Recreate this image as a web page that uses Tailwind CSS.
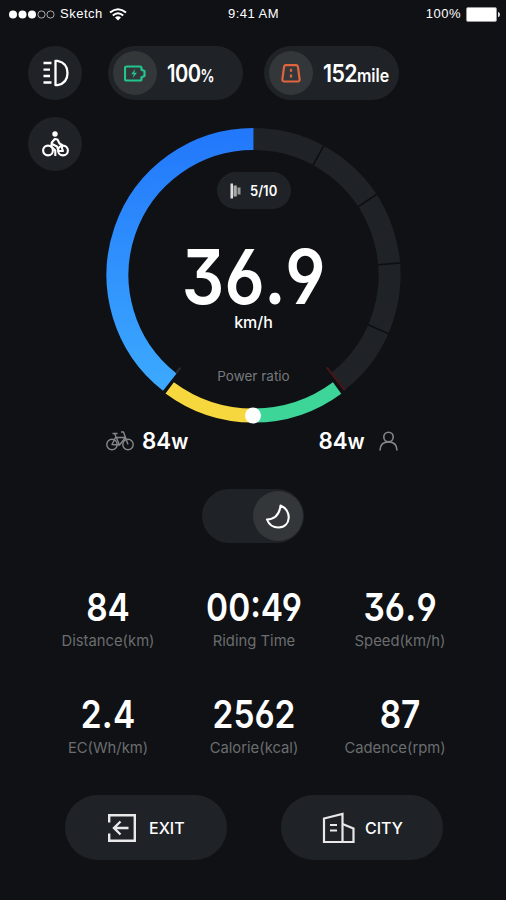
<!DOCTYPE html>
<html lang="en">

<head>
  <meta charset="UTF-8" />
  <meta name="viewport" content="width=device-width, initial-scale=1.0" />
  <title>Ride Dashboard</title>
  <script src="https://cdn.jsdelivr.net/npm/@tailwindcss/browser@4"></script>
  <style>
    /* open six / nine and flat three for the digits */
    .num {
      font-feature-settings: "cv03", "cv04", "cv09";
    }
  </style>
</head>

<body class="bg-[#0f1114] text-white font-['Inter',sans-serif] w-[506px] h-[900px] overflow-hidden flex flex-col">

  <!-- Status bar -->
  <div class="grid grid-cols-3 items-center h-7 pl-[9px] pr-[6px] font-['Liberation_Sans',sans-serif] shrink-0">
    <div class="flex items-center">
      <svg class="w-[47px] h-[9px]" viewBox="0 0 47 9">
        <g fill="#fff">
          <circle cx="4" cy="4.5" r="4" />
          <circle cx="13.5" cy="4.5" r="4" />
          <circle cx="23" cy="4.5" r="4" />
        </g>
        <g fill="none" stroke="#aaa" stroke-width="1">
          <circle cx="32.5" cy="4.5" r="3.6" />
          <circle cx="41.5" cy="4.5" r="3.6" />
        </g>
      </svg>
      <span class="ml-[4px] w-[43px] text-[13px] tracking-[0.5px]">Sketch</span>
      <svg class="ml-[6px] w-[18px] h-[13px]" viewBox="0 0 18 13" fill="none" stroke="#fff" stroke-width="2">
        <path d="M1 4.6Q9-2.2 17 4.6" />
        <path d="M3.8 7.6Q9 3 14.2 7.6" />
        <path d="M6 9.6Q9 7 12 9.6L9 12.6Z" fill="#fff" stroke="none" />
      </svg>
    </div>
    <div class="text-center text-[13px] tracking-[0.45px] translate-x-[-1px]">9:41 AM</div>
    <div class="flex items-center justify-end">
      <span class="text-[13px] tracking-[0.5px]">100%</span>
      <svg class="ml-[5px] w-[34px] h-[15px]" viewBox="0 0 34 15">
        <rect x=".5" y=".5" width="30" height="14" rx="1.5" fill="#fff" stroke="#999" />
        <path d="M32 5q2 0 2 2.500t-2 2.500z" fill="#ddd" />
      </svg>
    </div>
  </div>

  <div class="flex pl-[28px] mt-[18px] shrink-0">
    <!-- Side buttons -->
    <div class="flex flex-col gap-[17px]">
      <button class="w-[54px] h-[54px] rounded-full bg-[#1f2328] flex items-center justify-center">
        <svg class="w-[27px] h-[28px]" viewBox="0 0 27 28" fill="none" stroke="#fff" stroke-width="2.300">
          <path d="M1.500 4h8M1.500 10.600h6.500M1.500 17h6.500M1.500 23.500h8" />
          <path d="M13.500 1.800h2q10 2 10 12.200t-10 12.200h-2z" stroke-linejoin="round" />
        </svg>
      </button>
      <button class="w-[54px] h-[54px] rounded-full bg-[#1f2328] flex items-center justify-center">
        <svg class="w-[27px] h-[26px]" viewBox="0 0 27 26" fill="none" stroke="#fff" stroke-width="2.100" stroke-linejoin="round">
          <circle cx="6" cy="19.500" r="4.900" />
          <circle cx="21" cy="19.500" r="4.900" />
          <circle cx="13" cy="3" r="2.700" fill="#fff" stroke="none" />
          <path d="M13.300 25v-5.500l-4-4 .5-4 3-3.500 2.700.5 2 4 2.500 1.500v3M10 13l5 2.500 1.500 4.500h4.500l-1.500-4" />
        </svg>
      </button>
    </div>

    <div class="ml-[24px] w-[295px]">
      <!-- Battery and range -->
      <div class="flex pl-[2px] gap-[21px] w-[296px]">
        <div class="flex items-center w-[135px] h-[54px] rounded-full bg-[#1f2328] pl-[5px] shrink-0">
          <div class="w-[44px] h-[44px] rounded-full bg-[#33373a] flex items-center justify-center">
            <svg class="w-[22px] h-[17px]" viewBox="0 0 22 17" fill="none" stroke="#22c58b" stroke-width="2.200">
              <path d="M2.500 1.500h13.500q1.500 0 1.500 1.500v1.800l3 1.200v5l-3 1.200v1.800q0 1.500-1.500 1.500h-13.500q-1.500 0-1.500-1.500v-11q0-1.500 1.500-1.500z" stroke-linejoin="round" />
              <path d="M11.200 4l-4 5.200h2.600l-1 3.800 4.200-5.200h-2.700z" fill="#22c58b" stroke="none" />
            </svg>
          </div>
          <div class="ml-[10px] mt-[2px] flex items-baseline font-semibold origin-left scale-x-[.84] whitespace-nowrap">
            <span class="num text-[24px] tracking-[-0.7px]">100</span><span class="text-[17px]">%</span>
          </div>
        </div>
        <div class="flex items-center w-[135px] h-[54px] rounded-full bg-[#1f2328] pl-[5px] shrink-0">
          <div class="w-[44px] h-[44px] rounded-full bg-[#33373a] flex items-center justify-center">
            <svg class="w-[20px] h-[19px]" viewBox="0 0 20 19" fill="none" stroke="#e0653f" stroke-width="2.200">
              <path d="M5 1.200h10q1.600 0 1.900 1.500l1.700 12.300q.2 2.500-2 2.500h-13.200q-2.200 0-2-2.500l1.700-12.300q.3-1.500 1.900-1.500z" />
              <path d="M10 4.800v3M10 10.500v3" />
            </svg>
          </div>
          <div class="ml-[10px] mt-[2px] flex items-baseline font-semibold origin-left scale-x-[.89] whitespace-nowrap">
            <span class="num text-[24px] tracking-[-0.7px]">152</span><span class="text-[18px]">mile</span>
          </div>
        </div>
      </div>

      <!-- Speed gauge -->
      <div class="relative mt-[28px] w-[295px] h-[295px]">
        <svg class="w-[295px] h-[295px] overflow-visible" viewBox="0 0 295 295" fill="none">
          <defs>
            <linearGradient id="speed" x1="0" y1="0" x2="0" y2="260" gradientUnits="userSpaceOnUse">
              <stop offset="0" stop-color="#2277fb" />
              <stop offset="1" stop-color="#3ca9fe" />
            </linearGradient>
          </defs>
          <path d="M147.500 11A136 136 0 0 1 231.200 254.200" stroke="#1f2328" stroke-width="22" />
          <path d="M63.800 254.200A136 136 0 0 1 147.500 11" stroke="url(#speed)" stroke-width="22" />
          <!-- gear ticks -->
          <g stroke="#0c0e11" stroke-width="1.600">
            <path d="M147.500 0v22" transform="rotate(28.500 147.500 147)" />
            <path d="M147.500 0v22" transform="rotate(56.800 147.500 147)" />
            <path d="M147.500 0v22" transform="rotate(85.300 147.500 147)" />
            <path d="M147.500 0v22" transform="rotate(113.500 147.500 147)" />
          </g>
          <path d="M147.500 0v29" stroke="#4a1517" stroke-width="2" transform="rotate(141.600 147.500 147)" />
          <path d="M147.500 22v7" stroke="#292c2f" stroke-width="2" transform="rotate(218.300 147.500 147)" />
          <path d="M63.700 259.800A140.500 140.500 0 0 0 147.500 287.500" stroke="#f6d83e" stroke-width="14" />
          <path d="M147.500 287.500A140.500 140.500 0 0 0 231.100 260" stroke="#3dd598" stroke-width="14" />
          <circle cx="147" cy="287.500" r="8" fill="#fff" />
        </svg>
        <div class="absolute inset-0 flex flex-col items-center">
          <div class="mt-[44px] w-[74px] h-[37px] rounded-full bg-[#1f2328] flex items-center justify-center gap-[8px]">
            <svg class="w-[12px] h-[16px]" viewBox="0 0 12 16">
              <path d="M.5.5h2.500v15h-2.500z" fill="#ddd" />
              <path d="M3.500 2.500h3.300v11h-3.300z" fill="#aaa" />
              <path d="M7.500 4.500h3v7h-3z" fill="#999" />
            </svg>
            <span class="text-[14px] font-semibold w-[28px] origin-left scale-x-[.93]">5/10</span>
          </div>
          <div class="num mt-[39px] h-[58px] text-[75px] leading-[58px] font-semibold scale-x-[.89]">36<span class="font-['Lato',sans-serif] font-black leading-[20px] inline-block w-[23px] text-center">.</span>9</div>
          <div class="mt-[6px] text-[16px] leading-[20px] font-medium">km/h</div>
          <div class="mt-[36px] text-[13.500px] leading-[16px] text-[#77797b]">Power ratio</div>
        </div>
      </div>

      <!-- Power split -->
      <div class="flex items-center justify-between h-[26px] mt-[5px] pr-[3px]">
        <div class="flex items-center">
          <svg class="w-[28px] h-[20px]" viewBox="0 0 28 20" fill="none" stroke="#85878a" stroke-width="1.400" stroke-linejoin="round">
            <circle cx="6" cy="13.500" r="5.200" />
            <circle cx="22" cy="13.500" r="5.200" />
            <path d="M6 13.500l3.500-7h10l-6 7.500zM13.500 14l-4.700-11M6.500 2.500h5M22 13.500l-4.500-12.500h-2.500" />
          </svg>
          <span class="num ml-[8px] text-[23px] font-semibold origin-left scale-x-[.97]">84<span class="text-[21px]">w</span></span>
        </div>
        <div class="flex items-center">
          <span class="num mr-[14px] text-[23px] font-semibold origin-right scale-x-[.97]">84<span class="text-[21px]">w</span></span>
          <svg class="w-[19px] h-[20px]" viewBox="0 0 19 20" fill="none" stroke="#85878a" stroke-width="1.600">
            <circle cx="9.500" cy="6" r="4.700" />
            <path d="M1 19.500q0-8.500 8.500-8.500t8.500 8.500" />
          </svg>
        </div>
      </div>
    </div>
  </div>

  <!-- Night mode -->
  <div class="flex items-center justify-end self-center mt-[35px] w-[102px] h-[54px] rounded-full bg-[#1f2328] pr-[1.500px] shrink-0">
    <div class="w-[50px] h-[50px] rounded-full bg-[#33373a] flex items-center justify-center">
      <svg class="w-[26px] h-[26px] mt-[2px]" viewBox="0 0 26 26" fill="none" stroke="#fff" stroke-width="2.100" stroke-linejoin="round">
        <path d="M15.500 1.500C27 6 26.500 23 13.500 23.500Q5 23.500 2 15.500Q14 15 15.500 1.500Z" />
      </svg>
    </div>
  </div>

  <!-- Ride stats -->
  <div class="grid grid-cols-3 gap-y-[43px] w-[438px] ml-[35px] mt-[44px] text-center shrink-0">
    <div>
      <div class="num h-[40px] text-[38px] leading-[40px] font-semibold scale-x-[.88]">84</div>
      <div class="mt-[4px] text-[14.800px] leading-[20px] text-[#6b6d70]">Distance(km)</div>
    </div>
    <div>
      <div class="num h-[40px] text-[38px] leading-[40px] font-semibold scale-x-[.88]">00:49</div>
      <div class="mt-[4px] text-[14.800px] leading-[20px] text-[#6b6d70]">Riding Time</div>
    </div>
    <div>
      <div class="num h-[40px] text-[38px] leading-[40px] font-semibold scale-x-[.88]">36<span class="font-['Lato',sans-serif] font-black leading-[20px] inline-block w-[13px] text-center">.</span>9</div>
      <div class="mt-[4px] text-[14.800px] leading-[20px] text-[#6b6d70]">Speed(km/h)</div>
    </div>
    <div>
      <div class="num h-[40px] text-[38px] leading-[40px] font-semibold scale-x-[.88]">2<span class="font-['Lato',sans-serif] font-black leading-[20px] inline-block w-[13px] text-center">.</span>4</div>
      <div class="mt-[4px] text-[14.800px] leading-[20px] text-[#6b6d70]">EC(Wh/km)</div>
    </div>
    <div>
      <div class="num h-[40px] text-[38px] leading-[40px] font-semibold scale-x-[.88]">2562</div>
      <div class="mt-[4px] text-[14.800px] leading-[20px] text-[#6b6d70]">Calorie(kcal)</div>
    </div>
    <div>
      <div class="num h-[40px] text-[38px] leading-[40px] font-semibold scale-x-[.88]">87</div>
      <div class="mt-[4px] mr-[10px] text-[14.800px] leading-[20px] text-[#6b6d70]">Cadence(rpm)</div>
    </div>
  </div>

  <!-- Actions -->
  <div class="flex gap-[54px] pl-[65px] mt-[37px] shrink-0">
    <button class="flex items-center w-[162px] h-[65px] rounded-full bg-[#1f2328] pl-[42px]">
      <svg class="w-[30px] h-[30px]" viewBox="0 0 30 30" fill="none" stroke="#e8e8e8" stroke-width="2.400">
        <path d="M2.200 9.500V2.200h25.600v25.600H2.200v-7.300" />
        <path d="M21.500 15H8M13.500 8.500L7 15l6.500 6.500" />
      </svg>
      <span class="ml-[12px] text-[16px] font-medium">EXIT</span>
    </button>
    <button class="flex items-center w-[162px] h-[65px] rounded-full bg-[#1f2328] pl-[41px]">
      <svg class="w-[33px] h-[32px]" viewBox="0 0 33 32" fill="none" stroke="#e8e8e8" stroke-width="2.200">
        <path d="M2 30V6.500L20.500 2v28z" />
        <path d="M20.500 12l11 4.500V30h-11M8 13h7M8 18.500h7" />
      </svg>
      <span class="ml-[10px] text-[16px] font-medium">CITY</span>
    </button>
  </div>

</body>

</html>
